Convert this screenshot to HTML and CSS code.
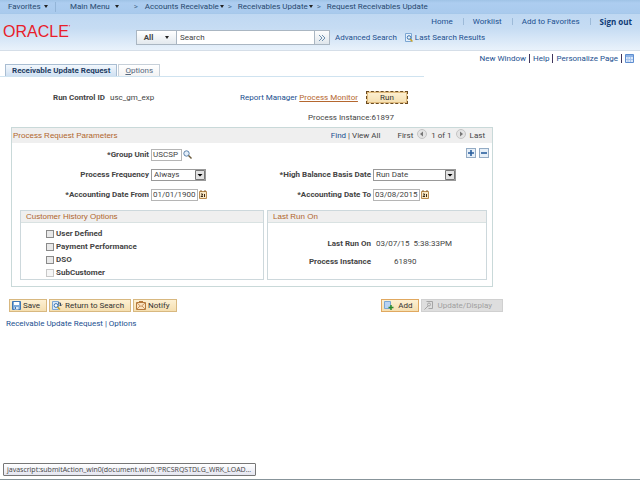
FILE: index.html
```html
<!DOCTYPE html>
<html lang="en">
<head>
    <meta charset="UTF-8">
    <meta name="viewport" content="width=device-width, initial-scale=1.0">
    <title>Request Receivables Update</title>
    <link rel="stylesheet" href="styles.css">
</head>
<body>
    <!-- Breadcrumb menu -->
    <nav class="crumbs">
        <a href="#" class="crumb crumb-fav">Favorites <i class="caret"></i></a>
        <a href="#" class="crumb crumb-main">Main Menu <i class="caret caret-far"></i></a>
        <span class="crumb-sep">&gt;</span>
        <a href="#" class="crumb">Accounts Receivable<i class="caret"></i></a>
        <span class="crumb-sep">&gt;</span>
        <a href="#" class="crumb">Receivables Update<i class="caret"></i></a>
        <span class="crumb-sep">&gt;</span>
        <a href="#" class="crumb">Request Receivables Update</a>
    </nav>

    <!-- Header -->
    <header class="app-header">
        <div class="logo">ORACLE<span class="logo-mark">'</span></div>
        <div class="header-main">
            <nav class="user-links">
                <a href="#">Home</a>
                <a href="#">Worklist</a>
                <a href="#">Add to Favorites</a>
                <a href="#" class="sign-out">Sign out</a>
            </nav>
            <form class="search">
                <button type="button" class="search-scope">All <i class="caret"></i></button>
                <input class="search-box" type="text" value="Search" aria-label="Search">
                <button type="button" class="search-go" aria-label="Go">
                    <svg width="8" height="8" viewBox="0 0 8 8" fill="none" stroke="#6d8fae"><path d="M1 1l3 3-3 3M4 1l3 3-3 3"/></svg>
                </button>
                <a href="#" class="search-adv">Advanced Search</a>
                <svg width="8" height="9" viewBox="0 0 8 9" fill="none"><path d="M.5.5h6v8h-6z" fill="#e5f0fb" stroke="#7ba6d3"/><circle cx="4" cy="4.500" r="1.800" stroke="#3b73ae"/><path d="M5 6l2.500 2.500" stroke="#c9a227" stroke-width="1.500"/></svg>
                <a href="#" class="search-last">Last Search Results</a>
            </form>
        </div>
    </header>

    <main class="page">
        <nav class="page-links">
            <a href="#">New Window</a>
            <a href="#">Help</a>
            <a href="#">Personalize Page</a>
            <svg width="9" height="9" viewBox="0 0 9 9"><path d="M.5.5h8v8h-8z" fill="#dbe8fa" stroke="#5f8ed0"/><path d="M1 1h7v2H1z" fill="#8db3e6"/><path d="M3 3v5M5.500 3v5M1 5.500h7" stroke="#a9c5ec"/></svg>
        </nav>

        <nav class="tabs">
            <a href="#" class="tab active">Receivable Update Request</a>
            <a href="#" class="tab"><u>O</u>ptions</a>
        </nav>

        <div class="run-row">
            <span class="run-id"><b>Run Control ID</b> <span>usc_gm_exp</span></span>
            <a href="#">Report Manager</a>
            <a href="#" class="monitor">Process Monitor</a>
            <button type="button" class="btn btn-run">Run</button>
        </div>
        <div class="run-instance">Process Instance:61897</div>

        <!-- Process request parameters -->
        <section class="group">
            <div class="group-head">
                <h2>Process Request Parameters</h2>
                <div class="pager">
                    <a href="#">Find</a><span class="bar">|</span><span>View All</span>
                    <span class="pager-first">First</span>
                    <svg class="pager-arrow" width="10" height="10" viewBox="0 0 10 10"><circle cx="5" cy="5" r="4.500" fill="#e4e4e4" stroke="#c4c4c4"/><path d="M6 2.500v5L3 5z" fill="#777"/></svg>
                    <span>1 of 1</span>
                    <svg class="pager-arrow" width="10" height="10" viewBox="0 0 10 10"><circle cx="5" cy="5" r="4.500" fill="#e4e4e4" stroke="#c4c4c4"/><path d="M4 2.500v5L7 5z" fill="#777"/></svg>
                    <span>Last</span>
                </div>
            </div>

            <div class="fields">
                <label for="unit">*Group Unit</label>
                <div class="field">
                    <input id="unit" class="text text-unit" type="text" value="USCSP">
                    <svg width="9" height="9" viewBox="0 0 9 9" fill="none"><circle cx="3.500" cy="3.500" r="2.700" fill="#e3eefa" stroke="#5c82aa"/><path d="M5.500 5.500l3 3" stroke="#6b5a3a" stroke-width="1.400"/></svg>
                </div>
                <div class="row-tools">
                    <button type="button" class="tool" aria-label="Add row"><svg width="8" height="8" viewBox="0 0 8 8" stroke="#2a5f9e" stroke-width="1.600"><path d="M4 1v6M1 4h6"/></svg></button>
                    <button type="button" class="tool" aria-label="Delete row"><svg width="8" height="8" viewBox="0 0 8 8" stroke="#2a5f9e" stroke-width="1.600"><path d="M1 4h6"/></svg></button>
                </div>

                <label for="freq">Process Frequency</label>
                <div class="select select-freq">
                    <select id="freq"><option>Always</option></select>
                    <svg width="10" height="10" viewBox="0 0 10 10"><path d="M.5.5h9v9h-9z" fill="#e2e2e2" stroke="#777"/><path d="M2.500 4h5L5 6.500z" fill="#000"/></svg>
                </div>
                <label for="basis">*High Balance Basis Date</label>
                <div class="select select-basis">
                    <select id="basis"><option>Run Date</option></select>
                    <svg width="10" height="10" viewBox="0 0 10 10"><path d="M.5.5h9v9h-9z" fill="#e2e2e2" stroke="#777"/><path d="M2.500 4h5L5 6.500z" fill="#000"/></svg>
                </div>

                <label for="from">*Accounting Date From</label>
                <div class="field">
                    <input id="from" class="text text-date" type="text" value="01/01/1900">
                    <svg width="8" height="9" viewBox="0 0 8 9"><path d="M.5 1.500h7v7h-7z" fill="#f9e7c4" stroke="#b98a4e"/><path d="M2 0v2M6 0v2" stroke="#8a6231"/><path d="M2 4h1.500v1L2 6.500h2M5.500 4v3" fill="none" stroke="#3d2a14"/></svg>
                </div>
                <label for="to">*Accounting Date To</label>
                <div class="field">
                    <input id="to" class="text text-date" type="text" value="03/08/2015">
                    <svg width="8" height="9" viewBox="0 0 8 9"><path d="M.5 1.500h7v7h-7z" fill="#f9e7c4" stroke="#b98a4e"/><path d="M2 0v2M6 0v2" stroke="#8a6231"/><path d="M2 4h1.500v1L2 6.500h2M5.500 4v3" fill="none" stroke="#3d2a14"/></svg>
                </div>
            </div>

            <div class="boxes">
                <section class="box box-history">
                    <h3>Customer History Options</h3>
                    <div class="checks">
                        <label><input type="checkbox"> User Defined</label>
                        <label><input type="checkbox"> Payment Performance</label>
                        <label><input type="checkbox"> DSO</label>
                        <label><input type="checkbox" disabled> SubCustomer</label>
                    </div>
                </section>
                <section class="box box-last">
                    <h3>Last Run On</h3>
                    <dl class="last-run">
                        <dt>Last Run On</dt>
                        <dd>03/07/15 &nbsp;5:38:33PM</dd>
                        <dt>Process Instance</dt>
                        <dd class="number">61890</dd>
                    </dl>
                </section>
            </div>
        </section>

        <!-- Toolbar -->
        <div class="toolbar">
            <button type="button" class="btn"><svg width="9" height="9" viewBox="0 0 9 9"><path d="M.5.5h8v8h-8z" fill="#7eabd9" stroke="#3f76b3"/><path d="M2 1h5v3H2z" fill="#fff"/><path d="M2.500 6h4v2.500h-4z" fill="#dce9f7"/><path d="M3 6h1v2H3z" fill="#3f76b3"/></svg>Save</button>
            <button type="button" class="btn"><svg width="11" height="9" viewBox="0 0 11 9" fill="none"><path d="M.5.5h6v8h-6z" fill="#d9e8f8" stroke="#7ba6d3"/><circle cx="4" cy="4.500" r="1.900" fill="#fff" stroke="#3b73ae"/><path d="M5.500 6L8 8.500" stroke="#c9a227" stroke-width="1.500"/><path d="M6 2h2.500v3M7 3.500L8.500 5 10 3.500" stroke="#3b4f66"/></svg>Return to Search</button>
            <button type="button" class="btn"><svg width="10" height="9" viewBox="0 0 10 9" fill="none"><path d="M.5 1.500h9v7h-9z" fill="#fbe3c0" stroke="#b5793c"/><path d="M1 2l4 3.500L9 2M1 8l3-3M9 8L6 5" stroke="#c9955e"/><path d="M3 .5h4" stroke="#b5793c"/></svg>Notify</button>
            <span class="spacer"></span>
            <button type="button" class="btn btn-add"><svg width="10" height="9" viewBox="0 0 10 9"><path d="M.5.5h6v7h-6z" fill="#b9d3f2" stroke="#7ba6d3"/><path d="M7 4v5M4.500 6.500h5" stroke="#2c8a2c" stroke-width="1.500"/></svg>Add</button>
            <button type="button" class="btn btn-update" disabled><svg width="9" height="9" viewBox="0 0 9 9" fill="none" stroke="#a5a5a5"><path d="M2.500.5h6v7h-4"/><circle cx="5" cy="3.500" r="1.500"/><path d="M4 5L.5 8.500"/></svg>Update/Display</button>
        </div>

        <div class="foot-links">
            <a href="#">Receivable Update Request</a> | <a href="#">Options</a>
        </div>
    </main>

    <div class="link-status">javascript:submitAction_win0(document.win0,'PRCSRQSTDLG_WRK_LOAD...</div>
</body>
</html>
```
FILE: styles.css
```css
* {
    box-sizing: border-box;
}

body {
    margin: 0;
    min-height: 100vh;
    background: #fff;
    color: #444;
    font-family: Roboto, "Liberation Sans", Arial, sans-serif;
    font-size: 8px;
    line-height: 10px;
    white-space: nowrap;
    border-bottom: 1px solid #87949a;
    position: relative;
}

a {
    color: #1b4f8f;
    text-decoration: none;
}

svg {
    display: block;
    flex: none;
}

button,
input,
select {
    margin: 0;
    padding: 0;
    border: 0;
    border-radius: 0;
    color: inherit;
    font: inherit;
    line-height: 10px;
}

/* Breadcrumb menu */
.crumbs {
    display: flex;
    align-items: center;
    height: 14px;
    padding-left: 8px;
    background: linear-gradient(#9fc3e6, #adcdf0 3px, #a9caed);
    border-bottom: 1px solid #a6c8ea;
}

.crumb {
    color: #27486e;
}

.crumb-fav {
    width: 48px;
    border-right: 1px solid #93b5d8;
}

.crumb-main {
    padding-left: 14px;
}

.crumb-sep {
    width: 14px;
    padding-left: 4px;
    color: #4b6c91;
}

.crumb-main + .crumb-sep {
    width: 26px;
    padding-left: 15px;
}

.caret {
    display: inline-block;
    margin-left: 1px;
    vertical-align: 1px;
    border: 2px solid transparent;
    border-top: 3px solid #222;
    border-bottom: 0;
}

.caret-far {
    margin-left: 3px;
}

/* Header */
.app-header {
    display: flex;
    height: 37px;
    background: linear-gradient(#bfd8f2, #c6dcf3 40%, #e9f2fb);
    border-bottom: 1px solid #d5dee8;
}

.logo {
    flex: none;
    width: 136px;
    padding: 8px 0 0 3px;
    color: #e8202a;
    font-family: "Liberation Sans", Arial, sans-serif;
    font-size: 16px;
    line-height: 20px;
}

.logo-mark {
    font-size: 8px;
    vertical-align: top;
    line-height: 12px;
}

.header-main {
    flex: 1;
}

.user-links {
    display: flex;
    justify-content: flex-end;
    height: 16px;
    padding: 3px 8px 0 0;
}

.user-links a + a {
    margin-left: 10px;
    padding-left: 10px;
    background: linear-gradient(#9dbad8, #9dbad8) 0 1px / 1px 7px no-repeat;
}

.user-links .sign-out {
    color: #0e3a75;
    font-family: "Open Sans", "Noto Sans", sans-serif;
    font-weight: bold;
}

.search {
    display: flex;
    align-items: center;
}

.search-scope {
    width: 41px;
    height: 15px;
    background: linear-gradient(#fff, #e3e9ee);
    border: 1px solid #aab6c2;
    font-weight: bold;
}

.search-scope .caret {
    margin-left: 10px;
}

.search-box {
    width: 138px;
    height: 15px;
    padding-left: 3px;
    background: #fff;
    border: 1px solid #aab6c2;
    border-left: 0;
}

.search-go {
    display: flex;
    align-items: center;
    justify-content: center;
    width: 15px;
    height: 15px;
    background: linear-gradient(#fdfdfd, #dfe6ec);
    border: 1px solid #aab6c2;
    border-left: 0;
}

.search-adv {
    margin: 0 8px 0 5px;
}

.search-last {
    margin-left: 2px;
}

/* Page */
.page-links {
    display: flex;
    align-items: center;
    justify-content: flex-end;
    height: 14px;
    padding-right: 6px;
}

.page-links a {
    margin-right: 3px;
    padding-right: 3px;
    border-right: 1px solid #40365c;
    line-height: 9px;
}

.tabs {
    display: flex;
    align-items: flex-end;
    gap: 1px;
    width: 424px;
    max-width: 100%;
    height: 12px;
    padding-left: 5px;
    border-bottom: 1px solid #cfe3f0;
}

.tab {
    height: 12px;
    padding: 0 6px;
    background: linear-gradient(#fff, #f3f3f3);
    border: 1px solid #c7d0d9;
    border-bottom: 0;
    color: #55677c;
    line-height: 12px;
}

.tab.active {
    background: linear-gradient(#f3f8fd, #cfe0f2);
    border-color: #a9bdd2;
    color: #1d3c63;
    font-weight: bold;
}

.run-row {
    display: flex;
    align-items: center;
    padding: 14px 0 0 53px;
}

.run-id {
    flex: none;
    width: 187px;
}

.run-id b {
    margin-right: 3px;
}

.monitor {
    margin: 0 8px 0 2px;
    color: #b5672f;
    text-decoration: underline;
}

.run-instance {
    padding: 9px 0 4px 308px;
}

/* Buttons */
.btn {
    display: flex;
    align-items: center;
    gap: 2px;
    height: 13px;
    padding: 0 6px 0 2px;
    background: linear-gradient(#fdf0d3, #f5dfb0);
    border: 1px solid #d8b880;
    color: #333;
}

.btn-run {
    justify-content: center;
    width: 42px;
    padding: 0;
    border: 1px dashed #6b4a20;
    outline: 1px solid #e0bb7d;
    outline-offset: -2px;
}

.btn-add {
    gap: 4px;
    border-color: #e0a860;
}

.btn-update {
    gap: 4px;
    padding-right: 10px;
    background: #dedede;
    border-color: #d0d0d0;
    color: #a0a0a0;
}

/* Parameter group */
.group {
    width: 482px;
    max-width: 100%;
    margin-left: 11px;
    padding-bottom: 6px;
    border: 1px solid #c9d9d9;
}

.group-head {
    display: flex;
    align-items: center;
    justify-content: space-between;
    height: 15px;
    padding: 0 7px 0 1px;
    background: #efefef;
}

h2,
h3 {
    margin: 0;
    color: #b0652c;
    font-family: "Liberation Sans", Arial, sans-serif;
    font-size: 8px;
    font-weight: normal;
}

.pager {
    display: flex;
    align-items: center;
}

.bar {
    margin: 0 2px;
}

.pager-first {
    margin-left: 17px;
}

.pager-arrow {
    margin: 0 4px 4px;
}

.fields {
    display: grid;
    grid-template-columns: 137px 120px 98px 1fr;
    column-gap: 2px;
    grid-template-rows: 15px 12px 13px;
    row-gap: 7px;
    align-items: center;
    padding: 4px 3px 9px 0;
}

.fields label {
    font-weight: bold;
    text-align: right;
}

.field {
    display: flex;
    align-items: center;
    gap: 1px;
}

.text,
.select {
    height: 12px;
    background: #fff;
    border: 1px solid #b5b5b5;
}

.text {
    padding-left: 1px;
}

.text-unit {
    width: 31px;
}

.text-date {
    width: 47px;
}

.select {
    display: flex;
    border-color: #999;
}

.select select {
    flex: 1;
    min-width: 0;
    height: 10px;
    padding-left: 2px;
    appearance: none;
    background: none;
}

.select-freq {
    width: 55px;
}

.select-basis {
    width: 83px;
}

.row-tools {
    grid-column: 3 / 5;
    display: flex;
    justify-content: flex-end;
    gap: 3px;
    padding-bottom: 4px;
}

.tool {
    display: flex;
    align-items: center;
    justify-content: center;
    width: 10px;
    height: 10px;
    background: #e6eff8;
    border: 1px solid #93abc4;
}

.boxes {
    display: grid;
    grid-template-columns: 244fr 220fr;
    gap: 3px;
    padding: 0 5px 0 8px;
}

.box {
    height: 70px;
    border: 1px solid #cdd8dc;
}

.box h3 {
    height: 12px;
    padding-left: 5px;
    background: #efefef;
    border-bottom: 1px solid #d9e2e2;
    line-height: 12px;
}

.checks {
    padding: 4px 0 0 25px;
}

.checks label {
    display: flex;
    align-items: center;
    gap: 2px;
    height: 13px;
    font-weight: bold;
}

.checks input {
    appearance: none;
    width: 8px;
    height: 8px;
    background: #e9e9e9;
    border: 1px solid #8a8a8a;
}

.checks input:disabled {
    background: #f6f6f6;
    border-color: #c8c8c8;
}

.last-run {
    display: grid;
    grid-template-columns: 103px 1fr;
    gap: 8px 5px;
    margin: 0;
    padding-top: 16px;
}

.last-run dt {
    font-weight: bold;
    text-align: right;
}

.last-run dd {
    margin: 0;
}

.last-run .number {
    padding-left: 18px;
}

/* Toolbar and bottom links */
.toolbar {
    display: flex;
    gap: 2px;
    width: 494px;
    max-width: 100%;
    margin: 12px 0 0 9px;
}

.spacer {
    flex: 1;
}

.foot-links {
    padding: 7px 0 0 6px;
    color: #1b4f8f;
}

.link-status {
    position: absolute;
    left: 3px;
    bottom: 3px;
    height: 13px;
    padding: 0 4px 0 3px;
    background: linear-gradient(#fff, #e4e5f0);
    border: 1px solid #767676;
    border-radius: 1px;
    color: #444;
    font-family: "Open Sans", "Noto Sans", sans-serif;
    font-size: 7px;
    line-height: 11px;
}
```
